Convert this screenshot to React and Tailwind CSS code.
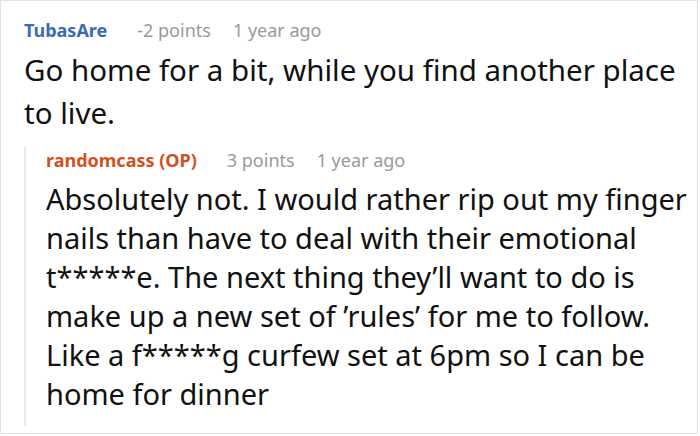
export default function App() {
  return (
    <div className="w-[700px] h-[436px] bg-white" style={{ fontFamily: '"Noto Sans", "Open Sans", sans-serif' }}>
      <div className="w-[698px] h-[434px] border border-[#e2e2e2] pl-[23px] pt-[16px] pr-[6px] overflow-hidden">
        {/* parent comment */}
        <div className="flex items-baseline text-[18px] leading-[26px]">
          <span className="font-bold text-[#3a6bb8]">TubasAre</span>
          <span className="ml-[30px] text-[#9a9a9a]">-2 points</span>
          <span className="ml-[22px] text-[#9a9a9a]">1 year ago</span>
        </div>
        <p className="mt-[5px] text-[29.5px] leading-[43px] text-[#111] whitespace-nowrap">
          Go home for a bit, while you find another place
          <br />
          to live.
        </p>

        {/* reply */}
        <div className="mt-[20px] border-l-2 border-[#e8e8e8] pl-[20px] pb-[13px]">
          <div className="-mt-[7px] flex items-baseline text-[18px] leading-[26px]">
            <span className="font-bold text-[#d4501f]">randomcass (OP)</span>
            <span className="ml-[30px] text-[#9a9a9a]">3 points</span>
            <span className="ml-[22px] text-[#9a9a9a]">1 year ago</span>
          </div>
          <p className="mt-[6px] text-[29px] leading-[39px] text-[#111] whitespace-nowrap">
            Absolutely not. I would rather rip out my finger
            <br />
            nails than have to deal with their emotional
            <br />
            t*****e. The next thing they’ll want to do is
            <br />
            make up a new set of ’rules’ for me to follow.
            <br />
            Like a f*****g curfew set at 6pm so I can be
            <br />
            home for dinner
          </p>
        </div>
      </div>
    </div>
  );
}
